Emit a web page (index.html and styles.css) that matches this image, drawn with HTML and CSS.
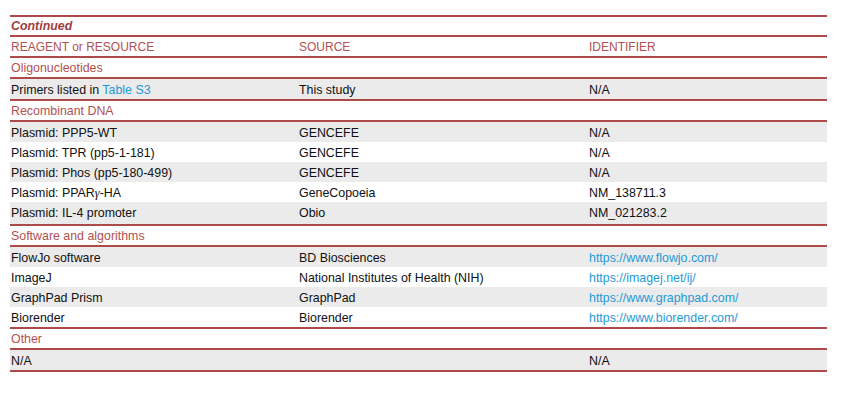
FILE: index.html
```html
<!DOCTYPE html>
<html lang="en">
<head>
<meta charset="utf-8">
<title>Key resources table (continued)</title>
<link rel="stylesheet" href="styles.css">
</head>
<body>
<table class="krt">
  <colgroup>
    <col class="c1"><col class="c2"><col class="c3">
  </colgroup>
  <thead>
    <tr class="cont ruled"><th colspan="3">Continued</th></tr>
    <tr class="head ruled"><th>REAGENT or RESOURCE</th><th>SOURCE</th><th>IDENTIFIER</th></tr>
  </thead>
  <tbody>
    <tr class="sec ruled"><td colspan="3">Oligonucleotides</td></tr>
    <tr class="g ruled"><td>Primers listed in <a class="lk">Table S3</a></td><td>This study</td><td>N/A</td></tr>
    <tr class="sec ruled"><td colspan="3">Recombinant DNA</td></tr>
    <tr class="g"><td>Plasmid: PPP5-WT</td><td>GENCEFE</td><td>N/A</td></tr>
    <tr class="w"><td>Plasmid: TPR (pp5-1-181)</td><td>GENCEFE</td><td>N/A</td></tr>
    <tr class="g"><td>Plasmid: Phos (pp5-180-499)</td><td>GENCEFE</td><td>N/A</td></tr>
    <tr class="w"><td>Plasmid: PPAR<span class="gr">γ</span>-HA</td><td>GeneCopoeia</td><td>NM_138711.3</td></tr>
    <tr class="g ruled tall"><td>Plasmid: IL-4 promoter</td><td>Obio</td><td>NM_021283.2</td></tr>
    <tr class="sec ruled"><td colspan="3">Software and algorithms</td></tr>
    <tr class="g"><td>FlowJo software</td><td>BD Biosciences</td><td><a class="lk">https://www.flowjo.com/</a></td></tr>
    <tr class="w"><td>ImageJ</td><td>National Institutes of Health (NIH)</td><td><a class="lk">https://imagej.net/ij/</a></td></tr>
    <tr class="g"><td>GraphPad Prism</td><td>GraphPad</td><td><a class="lk">https://www.graphpad.com/</a></td></tr>
    <tr class="w ruled"><td>Biorender</td><td>Biorender</td><td><a class="lk">https://www.biorender.com/</a></td></tr>
    <tr class="sec ruled"><td colspan="3">Other</td></tr>
    <tr class="g ruled"><td>N/A</td><td></td><td>N/A</td></tr>
  </tbody>
</table>
</body>
</html>
```
FILE: styles.css
```css
html, body {
  margin: 0;
  padding: 0;
  background: #ffffff;
}

body {
  padding: 15px 0 0 10px;
  font-family: "Liberation Sans", Arial, sans-serif;
  font-size: 12.4px;
  color: #111111;
}

.krt {
  border-collapse: collapse;
  table-layout: fixed;
  width: 817px;
  border-top: 2px solid #ad4b4b;
}

.c1 { width: 288px; }
.c2 { width: 290px; }
.c3 { width: 239px; }

.krt th,
.krt td {
  padding: 2px 0 0 1px;
  line-height: 17px;
  text-align: left;
  font-weight: normal;
  white-space: nowrap;
  vertical-align: top;
}

.ruled td,
.ruled th {
  border-bottom: 2px solid #ad4b4b;
}

.cont th {
  padding-top: 1px;
  font-weight: bold;
  font-style: italic;
  color: #a03d3d;
}

.head th {
  font-size: 12px;
  color: #b3514f;
}

.sec td {
  color: #b3514f;
}

.g td {
  background: #ebebec;
}

.w td {
  background: #ffffff;
}

.g td,
.w td {
  line-height: 18px;
}

.tall td {
  padding-bottom: 2px;
}

.gr {
  font-family: "Liberation Serif", "Times New Roman", serif;
  font-style: italic;
}

.lk {
  color: #1f9ad6;
  text-decoration: none;
}
```
